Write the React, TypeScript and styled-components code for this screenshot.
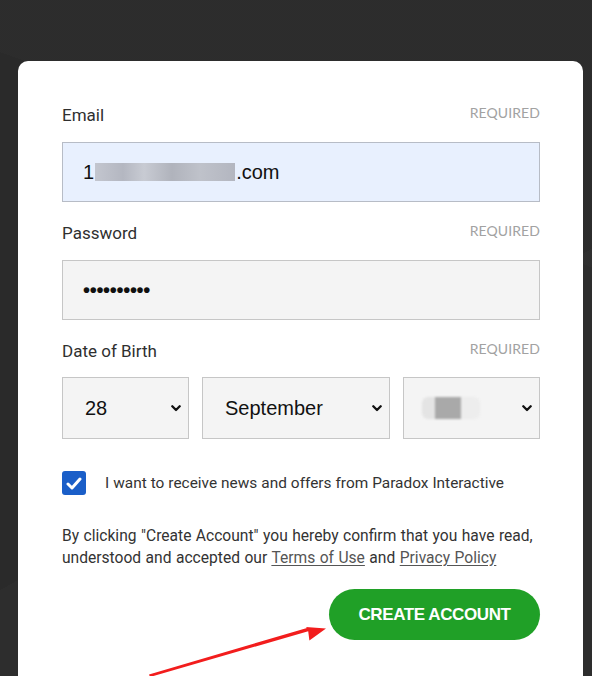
import React from "react";
import styled, { createGlobalStyle } from "styled-components";

const GlobalStyle = createGlobalStyle`
  html, body { margin: 0; padding: 0; }
  body {
    background: #2a2a2a;
    width: 592px;
    height: 676px;
    overflow: hidden;
  }
  * { box-sizing: border-box; }
`;

const Page = styled.div`
  position: relative;
  width: 592px;
  height: 676px;
  overflow: hidden;
  padding: 61px 9px 0 18px;
  background:
    linear-gradient(150deg, transparent 0 58%, rgba(255,255,255,0.015) 58% 100%),
    linear-gradient(200deg, rgba(255,255,255,0.012) 0 30%, transparent 30% 100%),
    #2a2a2a;
`;

const Card = styled.div`
  background: #ffffff;
  border-radius: 10px 10px 0 0;
  padding: 42px 43px 40px 44px;
  height: 640px;
`;

const Field = styled.div`
  display: flex;
  flex-direction: column;
  margin-bottom: 19px;
`;

const LabelRow = styled.div`
  display: flex;
  justify-content: space-between;
  align-items: center;
  height: 24px;
  margin-bottom: 15px;
`;

const Label = styled.label`
  font-family: Roboto, "Liberation Sans", sans-serif;
  font-size: 17px;
  color: #2f2f2f;
`;

const Required = styled.span`
  font-family: Lato, "Liberation Sans", sans-serif;
  font-size: 14px;
  color: #a2a2a2;
  letter-spacing: 0.1px;
  margin-top: -6px;
`;

const TextInput = styled.div<{ $autofill?: boolean }>`
  height: 60px;
  display: flex;
  align-items: center;
  padding-left: 20px;
  border: 1px solid ${(p) => (p.$autofill ? "#b7bcc6" : "#c6c6c6")};
  background: ${(p) => (p.$autofill ? "#e8f0fe" : "#f4f4f4")};
  font-family: "Liberation Sans", Arial, sans-serif;
  font-size: 20px;
  color: #111;
`;

const Blur = styled.span`
  display: inline-block;
  width: 140px;
  height: 18px;
  margin: 0 1px 0 1px;
  background: linear-gradient(90deg, #c3c6cf 0%, #b4b7c1 20%, #c8cbd3 35%, #b0b3bc 55%, #bfc2ca 75%, #b3b6c0 100%);
  filter: blur(0.6px);
`;

const Dots = styled.span`
  font-size: 20px;
  letter-spacing: -0.3px;
  font-weight: bold;
`;

const SelectRow = styled.div`
  display: grid;
  grid-template-columns: 127px 188px 1fr;
  gap: 13px;
  margin-top: -1px;
`;

const SelectBox = styled.div`
  height: 62px;
  display: flex;
  align-items: center;
  justify-content: space-between;
  padding: 0 7px 0 22px;
  border: 1px solid #c6c6c6;
  background: #f4f4f4;
  font-family: "Liberation Sans", Arial, sans-serif;
  font-size: 20px;
  color: #111;
`;

const YearBlur = styled.span`
  display: inline-block;
  width: 58px;
  height: 22px;
  margin-left: -4px;
  background: linear-gradient(90deg, #e4e4e4 0 22%, #a9a9a9 22% 68%, #ededed 68% 100%);
  border-radius: 6px;
  filter: blur(1px);
`;

const Chevron = () => (
  <svg width="10" height="7" viewBox="0 0 10 7">
    <path d="M1.3 1.3 L5 5 L8.7 1.3" fill="none" stroke="#111" strokeWidth="2.3" strokeLinecap="round" strokeLinejoin="round" />
  </svg>
);

const CheckRow = styled.div`
  display: flex;
  align-items: center;
  gap: 19px;
  margin-top: 32px;
`;

const CheckBox = styled.span`
  width: 24px;
  height: 24px;
  border-radius: 3px;
  background: #1a5ec8;
  display: flex;
  align-items: center;
  justify-content: center;
  flex-shrink: 0;
`;

const BodyText = styled.span`
  font-family: Roboto, "Liberation Sans", sans-serif;
  font-size: 15.4px;
  word-spacing: 0.2px;
  color: #333;
`;

const Paragraph = styled.p`
  margin: 30px 0 0 0;
  font-family: Roboto, "Liberation Sans", sans-serif;
  font-size: 15.6px;
  word-spacing: 0.6px;
  line-height: 22px;
  color: #333;
`;

const Link = styled.a`
  color: #555;
  text-decoration: underline;
  text-underline-offset: 2px;
`;

const ButtonRow = styled.div`
  display: flex;
  justify-content: flex-end;
  margin-top: 20px;
`;

const Button = styled.button`
  width: 211px;
  height: 51px;
  border: none;
  border-radius: 26px;
  background: #20a027;
  color: #fff;
  font-family: "Liberation Sans", Arial, sans-serif;
  font-weight: bold;
  font-size: 17px;
  letter-spacing: -0.4px;
  cursor: pointer;
`;

const Arrow = styled.svg`
  position: absolute;
  left: 0;
  top: 0;
  pointer-events: none;
`;

export default function App() {
  return (
    <>
      <GlobalStyle />
      <Page>
        <Card>
          <Field>
            <LabelRow>
              <Label>Email</Label>
              <Required>REQUIRED</Required>
            </LabelRow>
            <TextInput $autofill>
              1<Blur />.com
            </TextInput>
          </Field>
          <Field>
            <LabelRow>
              <Label>Password</Label>
              <Required>REQUIRED</Required>
            </LabelRow>
            <TextInput>
              <Dots>••••••••••</Dots>
            </TextInput>
          </Field>
          <Field>
            <LabelRow>
              <Label>Date of Birth</Label>
              <Required>REQUIRED</Required>
            </LabelRow>
            <SelectRow>
              <SelectBox>
                <span>28</span>
                <Chevron />
              </SelectBox>
              <SelectBox>
                <span>September</span>
                <Chevron />
              </SelectBox>
              <SelectBox>
                <YearBlur />
                <Chevron />
              </SelectBox>
            </SelectRow>
          </Field>
          <CheckRow>
            <CheckBox>
              <svg width="16" height="13" viewBox="0 0 16 13">
                <path d="M2 7 L6 11 L14 2" fill="none" stroke="#fff" strokeWidth="3" strokeLinecap="round" strokeLinejoin="round" />
              </svg>
            </CheckBox>
            <BodyText>I want to receive news and offers from Paradox Interactive</BodyText>
          </CheckRow>
          <Paragraph>
            By clicking "Create Account" you hereby confirm that you have read,
            <br />
            understood and accepted our <Link>Terms of Use</Link> and <Link>Privacy Policy</Link>
          </Paragraph>
          <ButtonRow>
            <Button>CREATE ACCOUNT</Button>
          </ButtonRow>
        </Card>
        <Arrow width="592" height="676" viewBox="0 0 592 676">
          <polygon
            points="150,677 308.2,631.2 309.4,640.5 326,628.5 305.8,626.9 307,628 149,674.5"
            fill="#f21d1d"
          />
        </Arrow>
      </Page>
    </>
  );
}
